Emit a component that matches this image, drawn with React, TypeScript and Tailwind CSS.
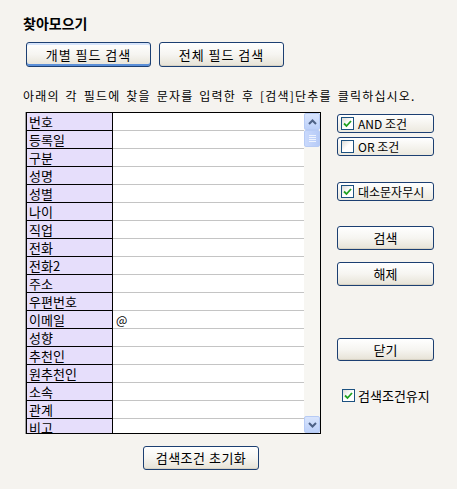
import React from "react";

const rows = ["번호","등록일","구분","성명","성별","나이","직업","전화","전화2","주소","우편번호","이메일","성향","추천인","원추천인","소속","관계","비고"];

const font = { fontFamily: '"Noto Sans CJK KR", "Liberation Sans", sans-serif' };

function XPButton({ children, className = "", focused = false }: { children: React.ReactNode; className?: string; focused?: boolean }) {
  return (
    <div
      className={`flex items-center justify-center rounded-[3px] border border-[#1c3f72] bg-gradient-to-b from-white via-[#f6f5f1] to-[#e6e2d6] text-[13px] text-black ${focused ? "shadow-[inset_0_-2px_0_#5b8fd8,inset_0_2px_0_#d6e4fb]" : "shadow-[inset_0_-1px_0_#d7d2c4]"} ${className}`}
    >
      {children}
    </div>
  );
}

function Check({ checked }: { checked: boolean }) {
  return (
    <div className="flex h-[13px] w-[13px] shrink-0 items-center justify-center border border-[#1c5180] bg-gradient-to-br from-[#dcdcd7] via-white to-white">
      {checked && (
        <svg width="9" height="9" viewBox="0 0 9 9">
          <path d="M1 4.5 L3.5 7 L8 2" fill="none" stroke="#21a121" strokeWidth="1.8" />
        </svg>
      )}
    </div>
  );
}

function CheckButton({ checked, label, className = "" }: { checked: boolean; label: string; className?: string }) {
  return (
    <div className={`flex h-[19px] items-center gap-[4px] rounded-[3px] border border-[#1c3f72] bg-gradient-to-b from-white to-[#ece9df] pl-[3px] text-[12px] ${className}`}>
      <Check checked={checked} />
      <span className="leading-none">{label}</span>
    </div>
  );
}

function ScrollArrow({ up }: { up: boolean }) {
  return (
    <div className="flex h-[17px] w-[16px] items-center justify-center rounded-[2px] border border-[#b7cbf5] bg-gradient-to-b from-[#d9e5fd] to-[#bcd0f9]">
      <svg width="9" height="6" viewBox="0 0 9 6">
        <path d={up ? "M1 5 L4.5 1.5 L8 5" : "M1 1 L4.5 4.5 L8 1"} fill="none" stroke="#4d6185" strokeWidth="2" />
      </svg>
    </div>
  );
}

export default function App() {
  return (
    <div className="h-[489px] w-[457px] overflow-hidden bg-[#f5f3ef] text-black" style={font}>
      <div className="pl-[23px] pt-[13px] text-[14px] font-bold leading-[20px]">찾아모으기</div>
      <div className="mt-[9px] flex gap-[8px] pl-[26px]">
        <XPButton focused className="h-[25px] w-[125px] tracking-[1px]">개별 필드 검색</XPButton>
        <XPButton className="h-[25px] w-[125px] tracking-[1px]">전체 필드 검색</XPButton>
      </div>
      <div className="mt-[21px] whitespace-nowrap pl-[23px] text-[12px] leading-[16px] tracking-[1.2px] [word-spacing:2px]">
        아래의 각 필드에 찾을 문자를 입력한 후 [검색]단추를 클릭하십시오.
      </div>
      <div className="mt-[8px] flex pl-[26px]">
        <div className="relative h-[322px] w-[295px] overflow-hidden border border-black shadow-[-1px_0_0_#a0a0a0]">
          <div className="flex">
            <div className="w-[277px]">
              {rows.map((r) => (
                <div key={r} className="flex h-[18px]">
                  <div className="h-[18px] w-[86px] border-b border-r border-black bg-[#e6defb] pl-[2px] text-[13px] leading-[17px]">{r}</div>
                  <div className="h-[18px] flex-1 border-b border-[#c4c4c4] bg-white pl-[3px] text-[12px] leading-[17px]">
                    {r === "이메일" ? "@" : ""}
                  </div>
                </div>
              ))}
            </div>
            <div className="flex h-[320px] w-[16px] flex-col bg-[#f7f6f2]">
              <ScrollArrow up />
              <div className="flex h-[17px] w-[16px] items-center justify-center rounded-[2px] border border-[#b7cbf5] bg-gradient-to-r from-[#c9d9fc] to-[#b7cbf7]">
                <div className="flex flex-col gap-[1px]">
                  <div className="h-px w-[7px] bg-[#eef3fe]" />
                  <div className="h-px w-[7px] bg-[#eef3fe]" />
                  <div className="h-px w-[7px] bg-[#eef3fe]" />
                  <div className="h-px w-[7px] bg-[#eef3fe]" />
                </div>
              </div>
              <div className="flex-1" />
              <ScrollArrow up={false} />
            </div>
          </div>
        </div>
        <div className="ml-[16px] flex w-[97px] flex-col">
          <CheckButton checked label="AND 조건" className="mt-[2px]" />
          <CheckButton checked={false} label="OR 조건" className="mt-[4px]" />
          <CheckButton checked label="대소문자무시" className="mt-[26px]" />
          <XPButton className="mt-[25px] h-[24px]">검색</XPButton>
          <XPButton className="mt-[12px] h-[24px]">해제</XPButton>
          <XPButton className="mt-[52px] h-[23px]">닫기</XPButton>
          <div className="mt-[28px] flex items-center gap-[3px] pl-[5px] text-[13px] leading-none">
            <Check checked />
            <span>검색조건유지</span>
          </div>
        </div>
      </div>
      <div className="mt-[12px] pl-[143px]">
        <XPButton className="h-[24px] w-[116px] tracking-[0.5px]">검색조건 초기화</XPButton>
      </div>
    </div>
  );
}
